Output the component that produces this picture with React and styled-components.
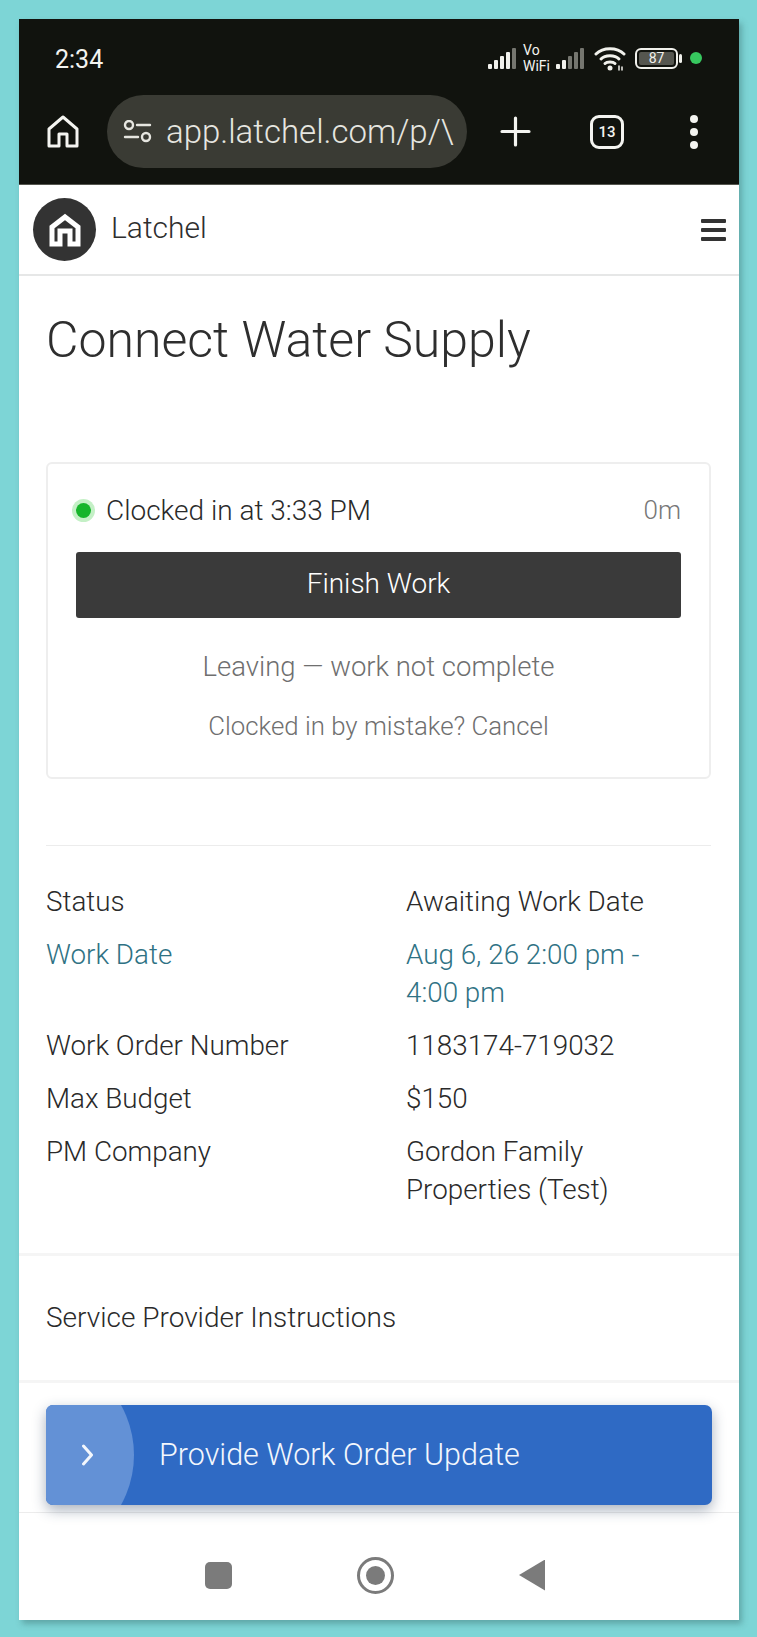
import React from "react";
import styled, { createGlobalStyle } from "styled-components";

const GlobalStyle = createGlobalStyle`
  html, body {
    margin: 0;
    padding: 0;
    background: #7dd5d6;
  }
  * { box-sizing: border-box; }
`;

function App() {
  return (
    <>
      <GlobalStyle />
      <Page>
        <Phone>
          <BrowserChrome>
            <StatusBar>
              <Clock>2:34</Clock>
              <StatusIcons>
                <SignalBars strong={4} />
                <VoWifi>
                  Vo
                  <br />
                  WiFi
                </VoWifi>
                <SignalBars strong={2} />
                <WifiIcon />
                <Battery>
                  <BatteryLevel>87</BatteryLevel>
                </Battery>
                <RecordDot />
              </StatusIcons>
            </StatusBar>
            <AddressRow>
              <HomeIcon />
              <UrlPill>
                <TuneIcon />
                <UrlText>app.latchel.com/p/\</UrlText>
              </UrlPill>
              <PlusIcon />
              <TabCount>13</TabCount>
              <MenuDots>
                <i />
                <i />
                <i />
              </MenuDots>
            </AddressRow>
          </BrowserChrome>

          <NavBar>
            <Brand>
              <LogoCircle>
                <LogoIcon />
              </LogoCircle>
              <BrandName>Latchel</BrandName>
            </Brand>
            <Hamburger>
              <i />
              <i />
              <i />
            </Hamburger>
          </NavBar>

          <Content>
            <Title>Connect Water Supply</Title>
            <ClockCard>
              <ClockRow>
                <ClockLabel>
                  <GreenDot />
                  Clocked in at 3:33 PM
                </ClockLabel>
                <Elapsed>0m</Elapsed>
              </ClockRow>
              <FinishButton>Finish Work</FinishButton>
              <LeavingLink>Leaving — work not complete</LeavingLink>
              <CancelLink>Clocked in by mistake? Cancel</CancelLink>
            </ClockCard>
            <Separator />
            <Details>
              <Row>
                <Label>Status</Label>
                <Value>Awaiting Work Date</Value>
              </Row>
              <Row $link>
                <Label>Work Date</Label>
                <Value>Aug 6, 26 2:00 pm -<br />4:00 pm</Value>
              </Row>
              <Row>
                <Label>Work Order Number</Label>
                <Value>1183174-719032</Value>
              </Row>
              <Row>
                <Label>Max Budget</Label>
                <Value>$150</Value>
              </Row>
              <Row>
                <Label>PM Company</Label>
                <Value>Gordon Family<br />Properties (Test)</Value>
              </Row>
            </Details>
          </Content>

          <InstructionsSection>Service Provider Instructions</InstructionsSection>

          <UpdateSection>
            <UpdateButton>
              <UpdateHandle>
                <ChevronIcon />
              </UpdateHandle>
              <UpdateLabel>Provide Work Order Update</UpdateLabel>
            </UpdateButton>
          </UpdateSection>

          <SystemNav>
            <NavSquare />
            <NavCircle />
            <NavBack />
          </SystemNav>
        </Phone>
      </Page>
    </>
  );
}

function SignalBars({ strong }) {
  const heights = [5, 9, 13, 17, 21];
  return (
    <svg width="30" height="22" viewBox="0 0 30 22">
      {heights.map((h, i) => (
        <rect
          key={i}
          x={i * 6}
          y={22 - h}
          width="4"
          height={h}
          rx="1"
          fill={i < strong ? "#f1f1ec" : "#75766f"}
        />
      ))}
    </svg>
  );
}

function WifiIcon() {
  return (
    <WifiSvg width="32" height="26" viewBox="0 0 32 26" fill="none" stroke="#f1f1ec" strokeWidth="3" strokeLinecap="round">
      <path d="M2 9C9 2 23 2 30 9" />
      <path d="M7 14C11 9.500 21 9.500 25 14" />
      <path d="M11 18.500C13 16.500 19 16.500 21 18.500" />
      <circle cx="16" cy="23" r="2.500" fill="#f1f1ec" stroke="none" />
      <path d="M25 25v-4M28 25v-3" strokeWidth="1.500" />
    </WifiSvg>
  );
}

function HomeIcon() {
  return (
    <svg width="32" height="33" viewBox="0 0 32 33" fill="none" stroke="#f4f4f0" strokeWidth="3" strokeLinejoin="round">
      <path d="M2 14L16 2l14 12v17H20V19h-8v12H2z" />
    </svg>
  );
}

function TuneIcon() {
  return (
    <svg width="29" height="23" viewBox="0 0 29 23" fill="none" stroke="#e6e6e0" strokeWidth="2.400" strokeLinecap="round">
      <circle cx="6" cy="5" r="4" />
      <path d="M14 5h13" />
      <path d="M2 17h13" />
      <circle cx="23" cy="17" r="4" />
    </svg>
  );
}

function PlusIcon() {
  return (
    <PlusSvg width="31" height="31" viewBox="0 0 31 31" stroke="#f4f4f0" strokeWidth="3.200" strokeLinecap="round">
      <path d="M15.500 2v27M2 15.500h27" />
    </PlusSvg>
  );
}

function LogoIcon() {
  return (
    <svg width="32" height="34" viewBox="0 0 32 34" fill="none" stroke="#fff" strokeWidth="5" strokeLinejoin="miter">
      <path d="M3 14L16 4l13 10v17h-8V18h-10v13H3z" />
    </svg>
  );
}

function ChevronIcon() {
  return (
    <svg width="14" height="22" viewBox="0 0 14 22" fill="none" stroke="#f3f7fd" strokeWidth="3" strokeLinecap="round" strokeLinejoin="round">
      <path d="M2.500 2l8 9-8 9" />
    </svg>
  );
}

const Page = styled.div`
  width: 757px;
  height: 1637px;
  padding: 19px 18px 17px 19px;
  background: #7dd5d6;
  overflow: hidden;
  font-family: Roboto, "Liberation Sans", sans-serif;
`;

const Phone = styled.div`
  height: 1601px;
  background: #fff;
  display: flex;
  flex-direction: column;
  box-shadow: 3px 4px 6px rgba(60, 110, 110, 0.45);
`;

const BrowserChrome = styled.div`
  height: 166px;
  flex-shrink: 0;
  background: #11130e;
  border-bottom: 1px solid #55564f;
  padding: 0 36px 0 28px;
  color: #f4f4f0;
`;

const StatusBar = styled.div`
  height: 76px;
  padding: 23px 0 0 8px;
  display: flex;
  justify-content: space-between;
  align-items: flex-start;
`;

const Clock = styled.div`
  font-size: 25px;
  line-height: 36px;
`;

const StatusIcons = styled.div`
  display: flex;
  align-items: center;
  gap: 5px;
  height: 36px;
  margin: -2px 1px 0 0;
`;

const VoWifi = styled.div`
  font-size: 14px;
  line-height: 16.500px;
  margin-right: 1px;
`;

const WifiSvg = styled.svg`
  margin-left: 3px;
`;

const Battery = styled.div`
  position: relative;
  width: 43px;
  height: 21px;
  margin-left: 4px;
  border: 2px solid #f1f1ec;
  border-radius: 6px;
  padding: 2px;

  &::after {
    content: "";
    position: absolute;
    right: -6px;
    top: 4px;
    width: 3px;
    height: 9px;
    border-radius: 2px;
    background: #f1f1ec;
  }
`;

const BatteryLevel = styled.div`
  height: 100%;
  background: #55564f;
  border-radius: 2px;
  font-size: 14px;
  line-height: 13px;
  text-align: center;
  color: #f1f1ec;
`;

const RecordDot = styled.div`
  width: 12px;
  height: 12px;
  margin-left: 7px;
  border-radius: 50%;
  background: #37c85f;
`;

const AddressRow = styled.div`
  display: flex;
  align-items: center;
  height: 73px;
`;

const UrlPill = styled.div`
  width: 360px;
  height: 73px;
  margin-left: 28px;
  padding-left: 16px;
  border-radius: 37px;
  background: #3a3b34;
  display: flex;
  align-items: center;
  gap: 14px;
  overflow: hidden;
  flex-shrink: 0;
`;

const UrlText = styled.div`
  font-size: 33px;
  font-weight: 300;
  color: #e6e6e0;
  white-space: nowrap;
`;

const PlusSvg = styled.svg`
  margin-left: 33px;
  flex-shrink: 0;
`;

const TabCount = styled.div`
  width: 34px;
  height: 34px;
  margin-left: 59px;
  border: 3px solid #f4f4f0;
  border-radius: 9px;
  font-size: 15px;
  font-weight: 500;
  line-height: 28px;
  text-align: center;
  flex-shrink: 0;
`;

const MenuDots = styled.div`
  margin-left: 66px;
  display: flex;
  flex-direction: column;
  gap: 5px;

  i {
    width: 8px;
    height: 8px;
    border-radius: 50%;
    background: #f4f4f0;
  }
`;

const NavBar = styled.div`
  height: 91px;
  flex-shrink: 0;
  padding: 0 13px 0 14px;
  display: flex;
  align-items: center;
  justify-content: space-between;
  border-bottom: 2px solid #e6e7e7;
`;

const Brand = styled.div`
  display: flex;
  align-items: center;
  gap: 15px;
`;

const LogoCircle = styled.div`
  width: 63px;
  height: 63px;
  border-radius: 50%;
  background: #333;
  display: flex;
  align-items: center;
  justify-content: center;
`;

const BrandName = styled.div`
  font-size: 30px;
  font-weight: 300;
  color: #2e2e2e;
  margin-bottom: 5px;
`;

const Hamburger = styled.div`
  display: flex;
  flex-direction: column;
  gap: 5px;

  i {
    width: 25px;
    height: 4px;
    border-radius: 1px;
    background: #333;
  }
`;

const Content = styled.div`
  padding: 0 28px 0 27px;
  height: 977px;
  flex-shrink: 0;
`;

const Title = styled.h1`
  margin: 0;
  padding-top: 34px;
  font-size: 50px;
  line-height: 60px;
  font-weight: 300;
  color: #2e2e2e;
`;

const ClockCard = styled.div`
  margin-top: 92px;
  height: 317px;
  padding: 22px 28px 0 28px;
  border: 2px solid #eeeeee;
  border-radius: 6px;
`;

const ClockRow = styled.div`
  display: flex;
  justify-content: space-between;
  align-items: center;
  height: 48px;
`;

const ClockLabel = styled.div`
  display: flex;
  align-items: center;
  gap: 15px;
  font-size: 28px;
  font-weight: 300;
  color: #2a2a2a;
`;

const GreenDot = styled.span`
  width: 15px;
  height: 15px;
  border-radius: 50%;
  background: #16b52b;
  box-shadow: 0 0 0 4px #c4f0c6;
`;

const Elapsed = styled.div`
  font-size: 26px;
  font-weight: 300;
  color: #777;
`;

const FinishButton = styled.div`
  margin-top: 18px;
  height: 66px;
  border-radius: 3px;
  background: #3a3a3a;
  color: #fff;
  font-size: 28px;
  font-weight: 300;
  display: flex;
  align-items: center;
  justify-content: center;
  padding-bottom: 4px;
`;

const LeavingLink = styled.div`
  margin-top: 30px;
  text-align: center;
  font-size: 27.500px;
  line-height: 38px;
  font-weight: 300;
  color: #6f6f6f;
`;

const CancelLink = styled.div`
  margin-top: 21px;
  text-align: center;
  font-size: 25.800px;
  line-height: 38px;
  font-weight: 300;
  color: #6f6f6f;
`;

const Separator = styled.div`
  margin-top: 66px;
  height: 1px;
  background: #ececec;
`;

const Details = styled.div`
  margin-top: 37px;
  display: flex;
  flex-direction: column;
  gap: 15px;
`;

const Row = styled.div`
  display: grid;
  grid-template-columns: 360px 1fr;
  font-size: 27.800px;
  line-height: 38px;
  font-weight: 300;
  color: ${(props) => (props.$link ? "#2f7284" : "#2a2a2a")};
`;

const Label = styled.div``;

const Value = styled.div``;

const InstructionsSection = styled.div`
  height: 130px;
  flex-shrink: 0;
  padding: 0 27px 2px;
  display: flex;
  align-items: center;
  font-size: 28px;
  font-weight: 300;
  color: #2a2a2a;
  border-top: 3px solid #f5f5f5;
  border-bottom: 3px solid #f5f5f5;
`;

const UpdateSection = styled.div`
  flex-shrink: 0;
  height: 130px;
  padding: 22px 27px 0 27px;
  border-bottom: 1px solid #ececec;
`;

const UpdateButton = styled.div`
  height: 100px;
  border-radius: 7px;
  background: #2f6ac4;
  display: flex;
  align-items: center;
  overflow: hidden;
  box-shadow: 0 5px 14px rgba(40, 60, 90, 0.4);
`;

const UpdateHandle = styled.div`
  width: 88px;
  height: 100%;
  flex-shrink: 0;
  padding-left: 35px;
  display: flex;
  align-items: center;
  background: #6391d6;
  clip-path: circle(102.600px at -14.600px 50%);
`;

const UpdateLabel = styled.div`
  margin-left: 25px;
  font-size: 30.500px;
  font-weight: 300;
  color: #f3f7fd;
  padding-bottom: 2px;
`;

const SystemNav = styled.div`
  flex: 1;
  display: flex;
  align-items: center;
  padding: 17px 0 0 186px;
`;

const NavSquare = styled.div`
  width: 27px;
  height: 27px;
  border-radius: 5px;
  background: #7b7b7b;
`;

const NavCircle = styled.div`
  width: 37px;
  height: 37px;
  margin-left: 125px;
  padding: 6px;
  border-radius: 50%;
  border: 3px solid #7b7b7b;
  background: #7b7b7b content-box;
`;

const NavBack = styled.div`
  width: 26px;
  height: 31px;
  margin-left: 125px;
  background: #7b7b7b;
  clip-path: polygon(100% 0, 100% 100%, 0 50%);
`;

export default App;
